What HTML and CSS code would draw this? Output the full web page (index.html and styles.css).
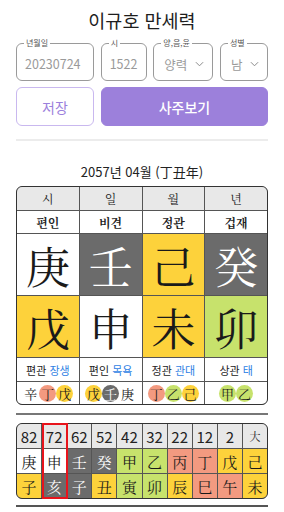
FILE: index.html
```html
<!DOCTYPE html>
<html lang="ko">
<head>
<meta charset="utf-8">
<title>이규호 만세력</title>
<link rel="stylesheet" href="styles.css">
</head>
<body>
<div class="page">
  <h1 class="title">이규호 만세력</h1>

  <div class="form">
    <fieldset class="field"><legend>년월일</legend><div class="val">20230724</div></fieldset>
    <fieldset class="field"><legend>시</legend><div class="val">1522</div></fieldset>
    <fieldset class="field"><legend>양,음,윤</legend><div class="val sel">양력<svg class="chev" viewBox="0 0 10 6" width="9" height="6"><path d="M1 1 L5 5 L9 1" fill="none" stroke="#8a8a8a" stroke-width="1.1"/></svg></div></fieldset>
    <fieldset class="field"><legend>성별</legend><div class="val sel">남<svg class="chev" viewBox="0 0 10 6" width="9" height="6"><path d="M1 1 L5 5 L9 1" fill="none" stroke="#8a8a8a" stroke-width="1.1"/></svg></div></fieldset>
  </div>

  <div class="buttons">
    <button class="btn btn-save">저장</button>
    <button class="btn btn-go">사주보기</button>
  </div>

  <div class="divider"></div>

  <div class="date">2057년 04월 (丁丑年)</div>

  <div class="saju">
    <div class="hd">시</div><div class="hd">일</div><div class="hd">월</div><div class="hd">년</div>
    <div class="ss">편인</div><div class="ss">비견</div><div class="ss">정관</div><div class="ss">겁재</div>
    <div class="big c-white">庚</div><div class="big c-dark">壬</div><div class="big c-yellow">己</div><div class="big c-dark">癸</div>
    <div class="big c-yellow">戊</div><div class="big c-white">申</div><div class="big c-yellow">未</div><div class="big c-green">卯</div>
    <div class="lb">편관 <span class="blue">장생</span></div>
    <div class="lb">편인 <span class="blue">목욕</span></div>
    <div class="lb">정관 <span class="blue">관대</span></div>
    <div class="lb">상관 <span class="blue">태</span></div>
    <div class="hid"><span class="ch">辛</span><span class="ch dot c-salmon">丁</span><span class="ch dot c-yellow">戊</span></div>
    <div class="hid"><span class="ch dot c-yellow">戊</span><span class="ch dot c-dark">壬</span><span class="ch">庚</span></div>
    <div class="hid"><span class="ch dot c-salmon">丁</span><span class="ch dot c-green">乙</span><span class="ch dot c-yellow">己</span></div>
    <div class="hid"><span class="ch dot c-green">甲</span><span class="ch dot c-green">乙</span></div>
  </div>

  <div class="sep"></div>

  <div class="daeun-wrap">
    <div class="daeun">
      <div class="dn">82</div><div class="dn">72</div><div class="dn">62</div><div class="dn">52</div><div class="dn">42</div><div class="dn">32</div><div class="dn">22</div><div class="dn">12</div><div class="dn">2</div><div class="dn small">大</div>
      <div class="dc c-white">庚</div><div class="dc c-white">申</div><div class="dc c-dark">壬</div><div class="dc c-dark">癸</div><div class="dc c-green">甲</div><div class="dc c-green">乙</div><div class="dc c-salmon">丙</div><div class="dc c-salmon">丁</div><div class="dc c-yellow">戊</div><div class="dc c-yellow">己</div>
      <div class="dc c-yellow">子</div><div class="dc c-dark">亥</div><div class="dc c-dark">子</div><div class="dc c-yellow">丑</div><div class="dc c-green">寅</div><div class="dc c-green">卯</div><div class="dc c-yellow">辰</div><div class="dc c-salmon">巳</div><div class="dc c-salmon">午</div><div class="dc c-yellow">未</div>
    </div>
    <div class="hl"></div>
  </div>

  <div class="sep bottom"></div>
</div>
</body>
</html>
```

FILE: styles.css
```css
* { box-sizing: border-box; }
body {
  margin: 0;
  background: #fff;
  color: #222;
  font-family: "Noto Sans CJK KR", "Noto Sans", sans-serif;
}
.page { padding: 8px 16px 0; }

.title {
  margin: 0;
  font-size: 18.5px;
  font-weight: 400;
  line-height: 24px;
  text-align: center;
  color: #1e1e1e;
}

.form {
  margin-top: 6px;
  display: grid;
  grid-template-columns: 78px 46px 60px 48px;
  justify-content: space-between;
}
.field {
  margin: 0;
  min-width: 0;
  padding: 0 6px;
  border: 1px solid #9a9a9a;
  border-radius: 6px;
}
.field legend {
  font-size: 8px;
  line-height: 10px;
  padding: 0 2px;
  margin-left: 1px;
  color: #555;
}
.val {
  height: 32px;
  line-height: 31px;
  font-size: 12.5px;
  color: #9a9a9a;
  padding-left: 2px;
  white-space: nowrap;
}
.val.sel {
  display: flex;
  align-items: center;
  justify-content: space-between;
  padding: 0 2px 0 4px;
}
.chev { display: block; }

.buttons {
  margin-top: 6px;
  display: grid;
  grid-template-columns: 78px 1fr;
  gap: 7px;
}
.btn {
  height: 39px;
  border-radius: 6px;
  font-family: inherit;
  font-size: 14px;
  cursor: pointer;
}
.btn-save {
  background: #fff;
  border: 1px solid #c9b8ef;
  color: #9b80dc;
}
.btn-go {
  background: #9c80db;
  border: 1px solid #9c80db;
  color: #fff;
  font-weight: 500;
}

.divider {
  margin-top: 13px;
  height: 2px;
  background: #ececec;
}

.date {
  margin-top: 21px;
  line-height: 20px;
  font-size: 13px;
  text-align: center;
  color: #222;
}

.saju {
  margin-top: 4px;
  display: grid;
  grid-template-columns: repeat(4, 1fr);
  grid-template-rows: 23px 22px 61px 61px 23px 22px;
  gap: 1px;
  background: #555;
  border: 1.5px solid #333;
  border-radius: 6px;
  overflow: hidden;
}
.saju > div {
  display: flex;
  align-items: center;
  justify-content: center;
}
.hd {
  background: #e8e8e8;
  font-family: "Noto Serif CJK KR", "Noto Sans CJK KR", serif;
  font-size: 12px;
  color: #222;
}
.ss {
  background: #fff;
  font-family: "Noto Serif CJK KR", "Noto Sans CJK KR", serif;
  font-size: 12px;
  font-weight: 700;
  color: #222;
}
.big {
  font-family: "Noto Serif CJK KR", "Noto Sans CJK KR", serif;
  font-size: 44px;
  line-height: 1;
}
.lb {
  background: #fff;
  font-size: 11px;
  color: #222;
  white-space: pre;
}
.blue { color: #2f7fe4; }
.hid { background: #fff; }
.ch {
  width: 17px;
  height: 17px;
  border-radius: 50%;
  display: inline-flex;
  align-items: center;
  justify-content: center;
  font-family: "Noto Serif CJK KR", "Noto Sans CJK KR", serif;
  font-size: 13px;
  line-height: 1;
  color: #222;
}

.c-white { background: #fff; color: #1a1a1a; }
.c-dark { background: #6b6b6b; color: #fff !important; }
.c-yellow { background: #fdd23b; color: #1a1a1a; }
.c-green { background: #c7e26c; color: #1a1a1a; }
.c-salmon { background: #f39a80; color: #1a1a1a; }

.sep {
  margin-top: 8px;
  height: 2px;
  background: #777;
}

.daeun-wrap {
  margin-top: 8px;
  position: relative;
}
.daeun {
  display: grid;
  grid-template-columns: repeat(10, 1fr);
  grid-template-rows: 24px 24px 24px;
  gap: 1px;
  background: #555;
  border: 1.5px solid #333;
  border-radius: 6px;
  overflow: hidden;
}
.daeun > div {
  display: flex;
  align-items: center;
  justify-content: center;
}
.dn {
  background: #e8e8e8;
  font-size: 15px;
  color: #222;
}
.dn.small {
  font-size: 11px;
  font-family: "Noto Serif CJK KR", "Noto Sans CJK KR", serif;
}
.dc {
  font-family: "Noto Serif CJK KR", "Noto Sans CJK KR", serif;
  font-size: 15px;
}
.hl {
  position: absolute;
  top: 0;
  bottom: 0;
  left: calc(1.5px + (100% - 12px) / 10);
  width: calc((100% - 12px) / 10 + 2px);
  border: 2px solid #e8141c;
  pointer-events: none;
}
.sep.bottom {
  margin-top: 6px;
  background: #555;
}
```
